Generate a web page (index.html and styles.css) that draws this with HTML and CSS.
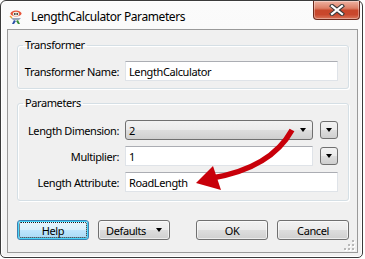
FILE: index.html
```html
<!DOCTYPE html>
<html>
<head>
<meta charset="utf-8">
<link rel="stylesheet" href="styles.css">
</head>
<body>
<div class="window">
  <div class="titlebar">
    <svg class="app-icon" width="16" height="16" viewBox="0 0 16 16">
      <ellipse cx="8" cy="4.5" rx="5.5" ry="3" fill="#e8553a"/>
      <ellipse cx="8" cy="5" rx="3.2" ry="2.2" fill="#f4f0e0"/>
      <circle cx="6.8" cy="5" r="0.9" fill="#333"/>
      <circle cx="9.2" cy="5" r="0.9" fill="#333"/>
      <path d="M3 9 L13 9 L11 11 L5 11 Z" fill="#9aa7b8"/>
      <path d="M6 11 L4 15 L6 15 L8 12 Z" fill="#2a4fa8"/>
      <path d="M10 11 L12 15 L10 15 L8 12 Z" fill="#3b8f3b"/>
      <path d="M2 7 L4 9" stroke="#e8a030" stroke-width="1.4"/>
    </svg>
    <span class="title">LengthCalculator Parameters</span>
    <div class="close">
      <svg width="16" height="12" viewBox="0 0 16 12">
        <path d="M3 2 L13 10 M13 2 L3 10" stroke="#3a3a3a" stroke-width="4.2" stroke-linecap="square"/>
        <path d="M3 2 L13 10 M13 2 L3 10" stroke="#ffffff" stroke-width="2.2" stroke-linecap="square"/>
      </svg>
    </div>
  </div>
  <div class="client">
    <fieldset class="group group-top">
      <legend>Transformer</legend>
      <div class="form">
        <label>Transformer Name:</label>
        <div class="field span">LengthCalculator</div>
      </div>
    </fieldset>
    <fieldset class="group group-params">
      <legend>Parameters</legend>
      <div class="form">
        <label>Length Dimension:</label>
        <div class="combo"><span>2</span><span class="tri"></span></div>
        <div class="menu-btn"><span class="tri"></span></div>
        <label>Multiplier:</label>
        <div class="field">1</div>
        <div class="menu-btn"><span class="tri"></span></div>
        <label>Length Attribute:</label>
        <div class="field span">RoadLength</div>
      </div>
    </fieldset>
    <div class="buttons">
      <div class="btn default"><span>Help</span></div>
      <div class="btn"><span>Defaults</span><span class="tri"></span></div>
      <div class="spacer"></div>
      <div class="btn">OK</div>
      <div class="btn">Cancel</div>
    </div>
    <div class="grip">
      <i style="left:8px;top:0"></i>
      <i style="left:4px;top:4px"></i><i style="left:8px;top:4px"></i>
      <i style="left:0;top:8px"></i><i style="left:4px;top:8px"></i><i style="left:8px;top:8px"></i>
    </div>
  </div>
</div>
<svg class="arrow" width="365" height="259" viewBox="0 0 365 259">
  <path d="M292 130 Q271 168 212 178" fill="none" stroke="#c8000a" stroke-width="5.5"/>
  <polygon points="196,183 213,166 221,190" fill="#c8000a"/>
</svg>
</body>
</html>
```

FILE: styles.css
```css
html, body {
  margin: 0;
  padding: 0;
  background: #ffffff;
}
body {
  position: relative;
  width: 365px;
  height: 259px;
  overflow: hidden;
  font-family: "Noto Sans", "Open Sans", sans-serif;
  font-size: 11px;
  letter-spacing: -0.4px;
  color: #000;
}
.window {
  box-sizing: border-box;
  width: 363px;
  height: 258px;
  border: 1px solid #3b3b3b;
  border-radius: 6px 6px 5px 5px;
  background: linear-gradient(#fbfbfb, #f2f2f2);
  padding: 0 4px 4px 6px;
  display: flex;
  flex-direction: column;
  box-shadow: inset 0 0 0 1px #ffffff;
}
.titlebar {
  height: 28px;
  display: flex;
  align-items: center;
}
.app-icon {
  margin-left: 1px;
  margin-top: 3px;
  flex: none;
}
.title {
  margin-left: 7px;
  margin-top: 2px;
  font-size: 12px;
  color: #000;
}
.close {
  margin-left: auto;
  margin-right: -2px;
  align-self: flex-start;
  width: 47px;
  height: 19px;
  box-sizing: border-box;
  border: 1px solid #6b2a1d;
  border-top: none;
  border-radius: 0 0 4px 4px;
  background: linear-gradient(#eeb3a2 0%, #dc7f66 40%, #c8472b 52%, #c9472c 75%, #d9775c 100%);
  display: flex;
  align-items: center;
  justify-content: center;
  box-shadow: inset 0 0 0 1px rgba(255,255,255,0.35);
}
.client {
  position: relative;
  flex: 1;
  border: 1px solid #9a9a9a;
  background: #f0f0f0;
  display: flex;
  flex-direction: column;
}
.group {
  margin: 8px 8px 0 9px;
  padding: 9px 9px 7px 0;
  border: 1px solid #d5dfe5;
  border-radius: 3px;
  box-shadow: inset 1px 1px 0 #ffffff, 1px 1px 0 #ffffff;
  min-width: 0;
}
.group legend {
  margin-left: 5px;
  padding: 0 2px;
  line-height: 14px;
  font-size: 11px;
}
.group-params {
  margin-top: 7px;
  padding-top: 10px;
  padding-bottom: 8px;
}
.form {
  display: grid;
  grid-template-columns: 107px 188px 7px 18px;
  column-gap: 0;
  row-gap: 6px;
  align-items: center;
}
.form label {
  text-align: right;
  white-space: nowrap;
  padding-right: 6px;
}
.field, .combo {
  box-sizing: border-box;
  height: 20px;
  display: flex;
  align-items: center;
  padding-left: 3px;
  white-space: nowrap;
}
.field {
  background: #fff;
  border: 1px solid #dfe3e8;
  border-top-color: #abadb3;
}
.form .field.span {
  grid-column: 2 / 5;
}
.form .field:not(.span), .form .combo {
  grid-column: 2 / 3;
}
.form .menu-btn {
  grid-column: 4 / 5;
}
.combo {
  border: 1px solid #707070;
  border-radius: 3px;
  background: linear-gradient(#f2f2f2 0%, #ebebeb 48%, #dddddd 52%, #cfcfcf 100%);
  justify-content: space-between;
  padding-right: 6px;
}
.tri {
  display: inline-block;
  width: 0;
  height: 0;
  border-left: 3.5px solid transparent;
  border-right: 3.5px solid transparent;
  border-top: 4px solid #000;
}
.menu-btn {
  box-sizing: border-box;
  width: 18px;
  height: 18px;
  border: 1px solid #707070;
  border-radius: 3px;
  background: linear-gradient(#f2f2f2 0%, #ebebeb 48%, #dddddd 52%, #cfcfcf 100%);
  display: flex;
  align-items: center;
  justify-content: center;
}
.buttons {
  display: flex;
  margin: 19px 8px 0 9px;
  gap: 9px;
}
.spacer {
  flex: 1;
}
.btn {
  box-sizing: border-box;
  width: 72px;
  height: 20px;
  border: 1px solid #707070;
  border-radius: 3px;
  background: linear-gradient(#f2f2f2 0%, #ebebeb 48%, #dddddd 52%, #cfcfcf 100%);
  display: flex;
  align-items: center;
  justify-content: center;
  gap: 10px;
  box-shadow: inset 0 0 0 1px rgba(255,255,255,0.6);
}
.btn.default {
  border-color: #3c7fb1;
  background: linear-gradient(#eaf6fd 0%, #d9f0fc 48%, #bee6fd 52%, #a7d9f5 100%);
  box-shadow: inset 0 0 0 1px #48d7fb;
  position: relative;
}
.btn.default::after {
  content: "";
  position: absolute;
  left: 1px;
  top: 1px;
  right: 1px;
  bottom: 1px;
  border: 1px dotted #1a1a1a;
  border-radius: 2px;
}
.grip {
  position: absolute;
  right: 3px;
  bottom: 2px;
  width: 10px;
  height: 10px;
}
.grip i {
  position: absolute;
  width: 2px;
  height: 2px;
  background: #b8b8b8;
  box-shadow: 1px 1px 0 #fff;
}
.arrow {
  position: absolute;
  left: 0;
  top: 0;
  pointer-events: none;
}
```
